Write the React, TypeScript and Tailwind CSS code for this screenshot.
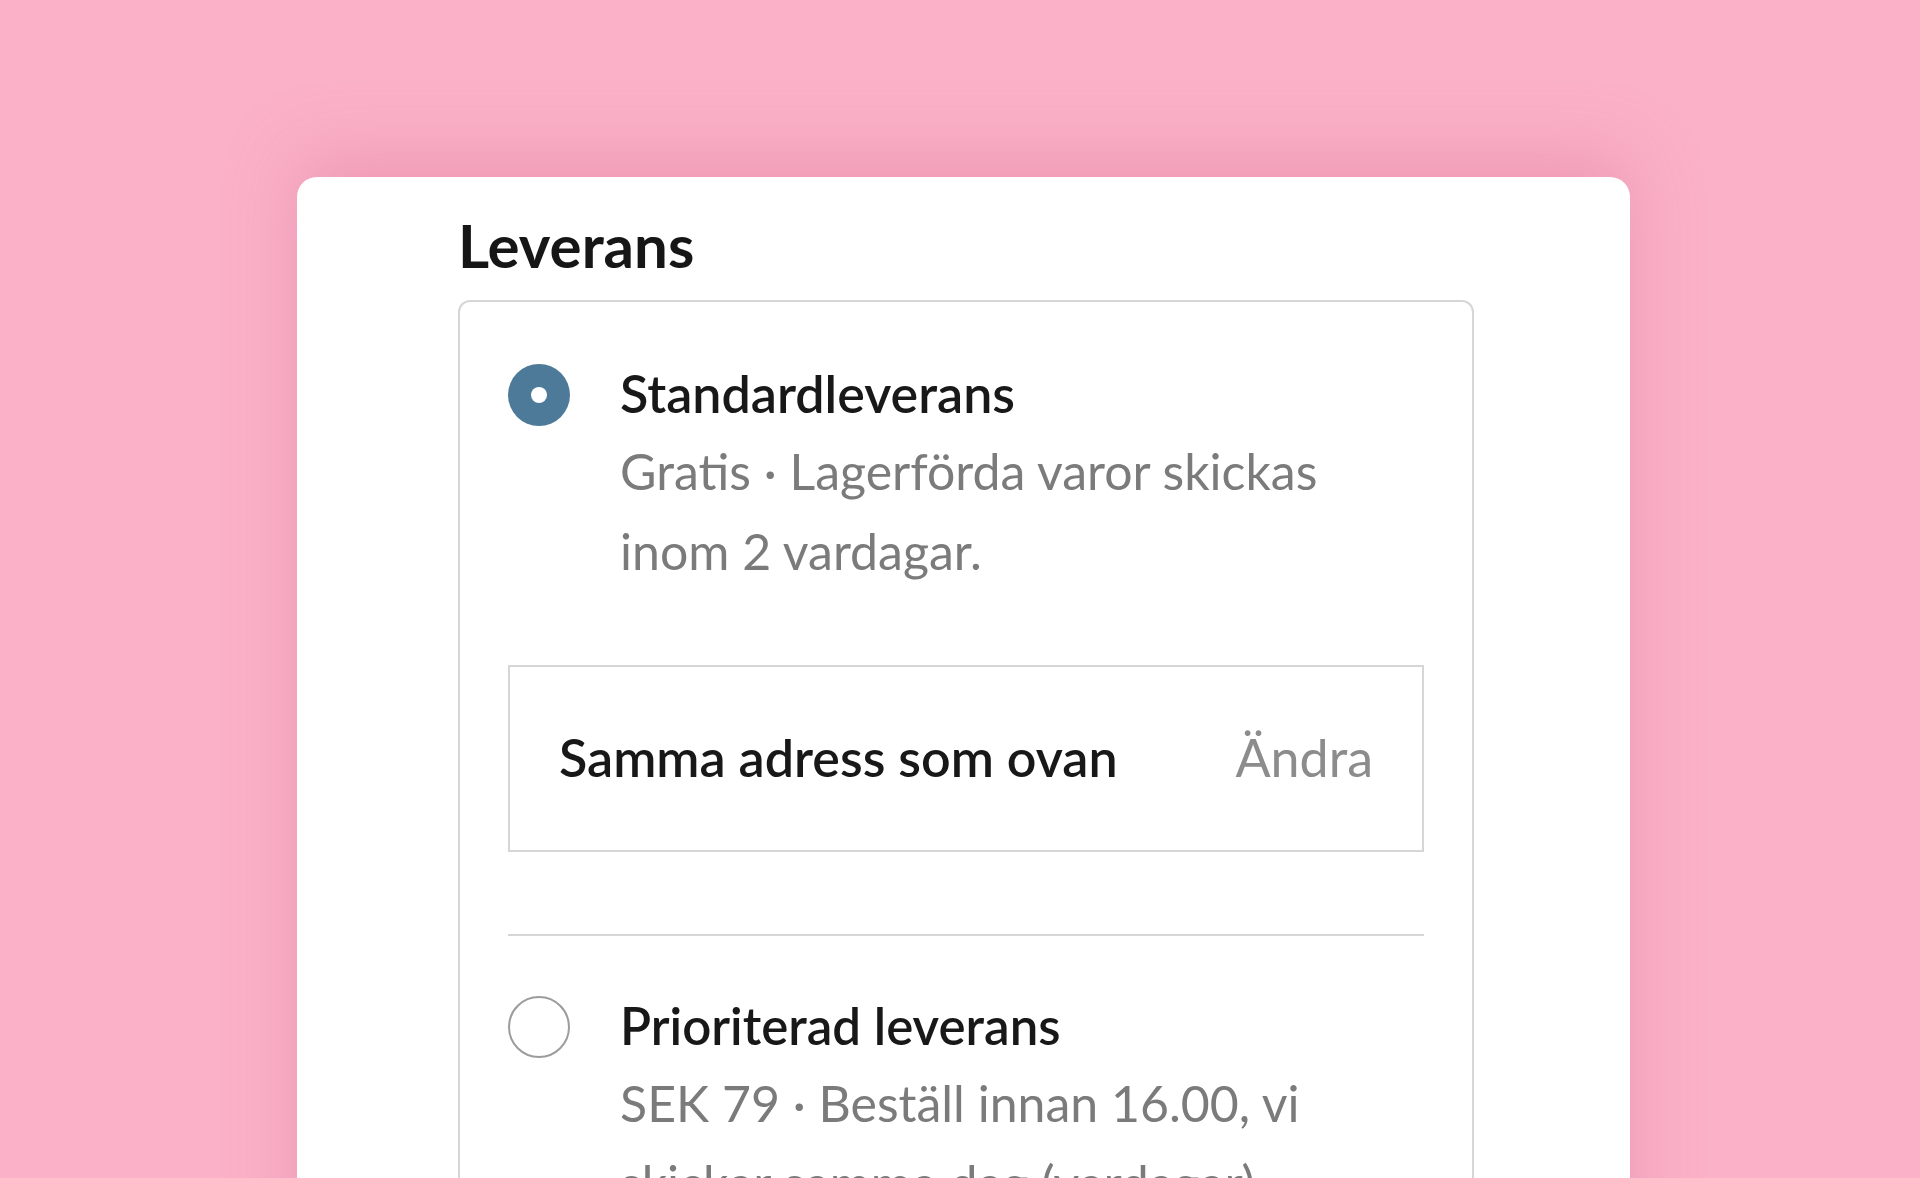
export default function App() {
  return (
    <div
      className="h-screen w-full overflow-hidden bg-[#fbb1c8] pt-[177px] pl-[297px]"
      style={{ fontFamily: "Lato, 'Noto Sans', sans-serif" }}
    >
      <div className="w-[1333px] rounded-[20px] bg-white pl-[161px] pt-[13px] pb-[300px] shadow-[0_-20px_70px_rgba(214,110,145,0.35)]">
        <h2 className="text-[60px] font-bold leading-[110px] text-[#161616]">Leverans</h2>

        <div className="mt-0 w-[1016px] rounded-[12px] border-2 border-[#d6d6d6] px-[48px] pt-[62px] pb-[80px]">
          {/* standard */}
          <div className="flex items-start gap-[50px]">
            <div className="flex h-[62px] w-[62px] shrink-0 items-center justify-center rounded-full bg-[#4e7a9a]">
              <div className="h-[16px] w-[16px] rounded-full bg-white" />
            </div>
            <div>
              <div className="-mt-[2px] text-[52px] font-semibold leading-[62px] text-[#181818]">Standardleverans</div>
              <p className="mt-[7px] text-[50px] leading-[80px] text-[#7b7b7b]">
                Gratis · Lagerförda varor skickas
                <br />
                inom 2 vardagar.
              </p>
            </div>
          </div>

          <div className="mt-[74px] flex h-[187px] items-center justify-between border-2 border-[#d6d6d6] px-[49px] pb-[4px]">
            <span className="text-[52px] font-semibold text-[#181818]">Samma adress som ovan</span>
            <span className="text-[52px] text-[#8c8c8c]">Ändra</span>
          </div>

          <div className="mt-[82px] h-[2px] bg-[#d6d6d6]" />

          {/* prioriterad */}
          <div className="mt-[60px] flex items-start gap-[50px]">
            <div className="h-[62px] w-[62px] shrink-0 rounded-full border-2 border-[#9c9c9c]" />
            <div>
              <div className="-mt-[1px] text-[51px] font-semibold leading-[62px] text-[#181818]">Prioriterad leverans</div>
              <p className="mt-[6px] text-[50px] leading-[80px] text-[#7b7b7b]">
                SEK 79 · Beställ innan 16.00, vi
                <br />
                skickar samma dag (vardagar).
              </p>
            </div>
          </div>
        </div>
      </div>
    </div>
  );
}
